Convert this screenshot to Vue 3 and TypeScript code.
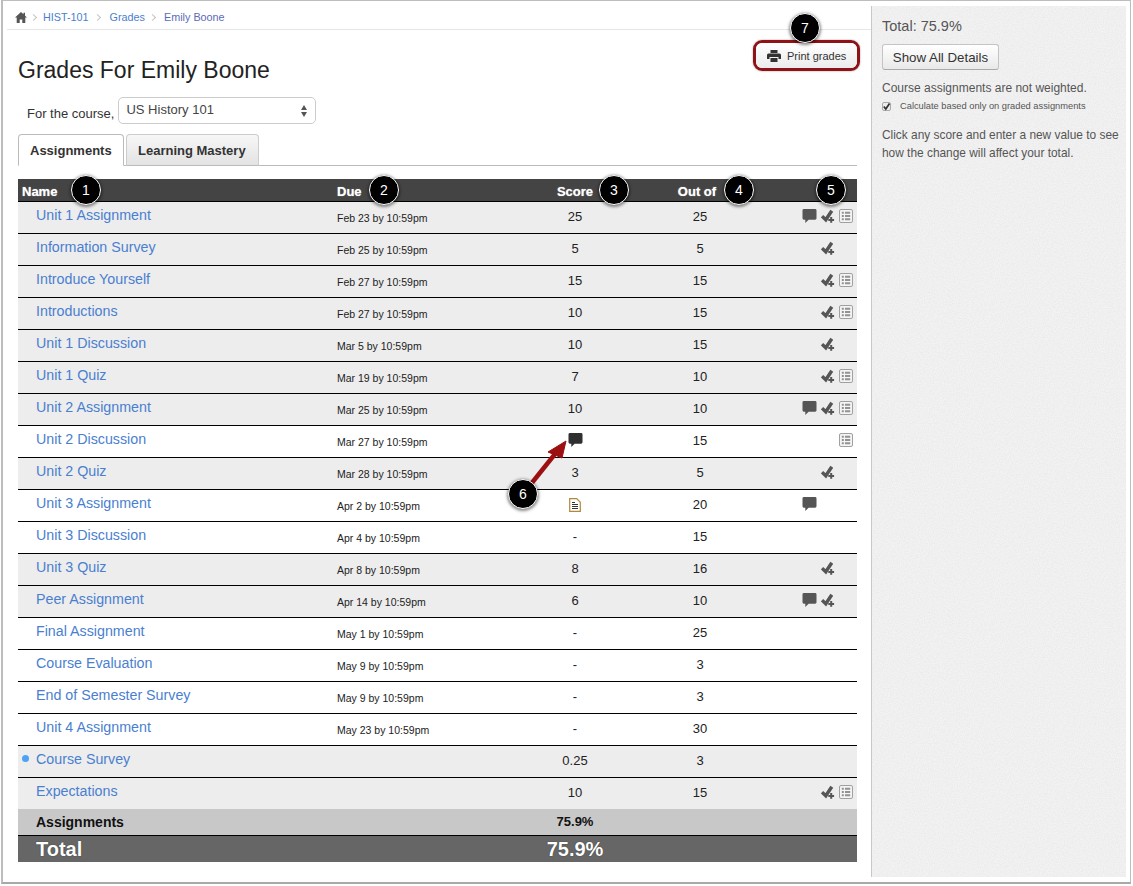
<script setup lang="ts">
interface Row {
  name: string;
  due: string;
  score: string;
  outOf: string;
  icons: string;
  shade?: boolean;
  dot?: boolean;
}

const rows: Row[] = [
  { name: "Unit 1 Assignment", due: "Feb 23 by 10:59pm", score: "25", outOf: "25", icons: "cmr", shade: true },
  { name: "Information Survey", due: "Feb 25 by 10:59pm", score: "5", outOf: "5", icons: "m", shade: true },
  { name: "Introduce Yourself", due: "Feb 27 by 10:59pm", score: "15", outOf: "15", icons: "mr", shade: true },
  { name: "Introductions", due: "Feb 27 by 10:59pm", score: "10", outOf: "15", icons: "mr", shade: true },
  { name: "Unit 1 Discussion", due: "Mar 5 by 10:59pm", score: "10", outOf: "15", icons: "m", shade: true },
  { name: "Unit 1 Quiz", due: "Mar 19 by 10:59pm", score: "7", outOf: "10", icons: "mr", shade: true },
  { name: "Unit 2 Assignment", due: "Mar 25 by 10:59pm", score: "10", outOf: "10", icons: "cmr", shade: true },
  { name: "Unit 2 Discussion", due: "Mar 27 by 10:59pm", score: "bubble", outOf: "15", icons: "r" },
  { name: "Unit 2 Quiz", due: "Mar 28 by 10:59pm", score: "3", outOf: "5", icons: "m", shade: true },
  { name: "Unit 3 Assignment", due: "Apr 2 by 10:59pm", score: "doc", outOf: "20", icons: "c" },
  { name: "Unit 3 Discussion", due: "Apr 4 by 10:59pm", score: "-", outOf: "15", icons: "" },
  { name: "Unit 3 Quiz", due: "Apr 8 by 10:59pm", score: "8", outOf: "16", icons: "m", shade: true },
  { name: "Peer Assignment", due: "Apr 14 by 10:59pm", score: "6", outOf: "10", icons: "cm", shade: true },
  { name: "Final Assignment", due: "May 1 by 10:59pm", score: "-", outOf: "25", icons: "" },
  { name: "Course Evaluation", due: "May 9 by 10:59pm", score: "-", outOf: "3", icons: "" },
  { name: "End of Semester Survey", due: "May 9 by 10:59pm", score: "-", outOf: "3", icons: "" },
  { name: "Unit 4 Assignment", due: "May 23 by 10:59pm", score: "-", outOf: "30", icons: "" },
  { name: "Course Survey", due: "", score: "0.25", outOf: "3", icons: "", shade: true, dot: true },
  { name: "Expectations", due: "", score: "10", outOf: "15", icons: "mr", shade: true },
];

// numbered callouts drawn on top of the screenshot
const notes = [
  { n: 1, x: 86, y: 190 },
  { n: 2, x: 384, y: 190 },
  { n: 3, x: 614, y: 190 },
  { n: 4, x: 739, y: 190 },
  { n: 5, x: 831, y: 190 },
  { n: 6, x: 523, y: 494 },
  { n: 7, x: 805, y: 28 },
];
</script>

<template>
  <div class="shot">
    <svg class="defs" width="0" height="0">
      <symbol id="i-comment" viewBox="0 0 15 15">
        <path d="M1.500 0h12A1.500 1.500 0 0 1 15 1.500v8.500a1.500 1.500 0 0 1-1.500 1.500H6.500L3 15v-3.500H1.500A1.500 1.500 0 0 1 0 10V1.500A1.500 1.500 0 0 1 1.500 0z" fill="currentColor" />
      </symbol>
      <symbol id="i-muted" viewBox="0 0 14 14">
        <path d="M1 7.200 4.800 10.800 10.800 1.800" fill="none" stroke="currentColor" stroke-width="3.400" />
        <path d="M10.200 8v5.800M7.300 10.900h5.800" fill="none" stroke="currentColor" stroke-width="2" />
      </symbol>
      <symbol id="i-rubric" viewBox="0 0 14 14">
        <rect x="0.500" y="0.500" width="13" height="13" rx="1.500" fill="#f4f4f4" stroke="#a0a0a0" />
        <path d="M2.800 3.700h2M2.800 7h2M2.800 10.300h2M6 3.700h5.200M6 7h5.200M6 10.300h5.200" stroke="#929292" stroke-width="2" />
      </symbol>
      <filter id="grain">
        <feTurbulence type="fractalNoise" baseFrequency="0.8" numOctaves="2" />
        <feColorMatrix values="0 0 0 0 0  0 0 0 0 0  0 0 0 0 0  0.07 0 0 0 -0.02" />
      </filter>
    </svg>

    <div class="window">
      <div class="main">
        <nav class="crumbs">
          <svg class="home" viewBox="0 0 12 11" width="12" height="11">
            <path d="M6 0 0 5.500h1.700V11h3V7.500h2.600V11h3V5.500H12L10 3.700V.8H8.500v1.500z" fill="#555" />
          </svg>
          <span class="sep first"></span>
          <a>HIST-101</a>
          <span class="sep wide"></span>
          <a>Grades</a>
          <span class="sep"></span>
          <a class="current">Emily Boone</a>
        </nav>

        <div class="content">
          <div class="title-row">
            <h1>Grades For Emily Boone</h1>
            <div class="print-ring">
              <button class="print">
                <svg viewBox="0 0 14 12" width="14" height="12">
                  <path d="M3.500 0h7v3h-7zM1.500 3.500h11A1.500 1.500 0 0 1 14 5v4h-2.500V7h-9v2H0V5a1.500 1.500 0 0 1 1.500-1.500zM3.500 8h7v4h-7z" fill="#333" />
                </svg>
                Print grades
              </button>
            </div>
          </div>

          <div class="course-row">
            <span class="course-label">For the course,</span>
            <div class="select">
              <span>US History 101</span>
              <span class="updown"><i class="up"></i><i class="down"></i></span>
            </div>
          </div>

          <div class="tabs">
            <div class="tab active">Assignments</div>
            <div class="tab">Learning Mastery</div>
          </div>

          <div class="table">
            <div class="row head">
              <div class="h-name">Name</div>
              <div>Due</div>
              <div class="center">Score</div>
              <div class="center h-out">Out of</div>
              <div></div>
            </div>

            <div v-for="r in rows" :key="r.name" class="row" :class="{ shade: r.shade }">
              <div class="name"><span v-if="r.dot" class="dot"></span><a>{{ r.name }}</a></div>
              <div class="due">{{ r.due }}</div>
              <div class="num score">
                <svg v-if="r.score === 'bubble'" class="score-bubble" width="15" height="14"><use href="#i-comment" /></svg>
                <svg v-else-if="r.score === 'doc'" class="score-doc" viewBox="0 0 12 14" width="12" height="14">
                  <path d="M.7.7h7l3.600 3.600v9H.7z" fill="#fff" stroke="#b08a3a" stroke-width="1.200" />
                  <path d="M3 4.500h3M3 6.500h6M3 8.500h6M3 10.500h6" stroke="#333" stroke-width="1" />
                </svg>
                <template v-else>{{ r.score }}</template>
              </div>
              <div class="num">{{ r.outOf }}</div>
              <div class="icons">
                <svg v-if="r.icons.includes('c')" class="ic-c" width="15" height="14"><use href="#i-comment" /></svg>
                <span v-else></span>
                <svg v-if="r.icons.includes('m')" class="ic-m" width="14" height="14"><use href="#i-muted" /></svg>
                <span v-else></span>
                <svg v-if="r.icons.includes('r')" width="14" height="14"><use href="#i-rubric" /></svg>
              </div>
            </div>

            <div class="row group">
              <div class="name">Assignments</div>
              <div></div>
              <div class="center">75.9%</div>
            </div>
            <div class="row total">
              <div class="name">Total</div>
              <div></div>
              <div class="center">75.9%</div>
            </div>
          </div>
        </div>
      </div>

      <aside class="side">
        <svg class="grain" width="100%" height="100%"><rect width="100%" height="100%" filter="url(#grain)" /></svg>
        <div class="side-total">Total: 75.9%</div>
        <button class="details">Show All Details</button>
        <p class="weighted">Course assignments are not weighted.</p>
        <label class="only-graded">
          <span class="check">
            <svg viewBox="0 0 9 9" width="9" height="9"><path d="M1.800 4.500 3.800 7 7.500 1.500" fill="none" stroke="#333" stroke-width="1.700" /></svg>
          </span>
          Calculate based only on graded assignments
        </label>
        <p class="hint">Click any score and enter a new value to see how the change will affect your total.</p>
      </aside>
    </div>

    <svg class="arrow" width="1133" height="886">
      <path d="M531 484 555 454" stroke="#9c1012" stroke-width="4.500" fill="none" />
      <path d="M566 441 548 452 562 458z" fill="#9c1012" stroke="#9c1012" stroke-width="1" />
    </svg>

    <div
      v-for="b in notes"
      :key="b.n"
      class="badge"
      :style="{ left: b.x - 15 + 'px', top: b.y - 15 + 'px' }"
    >
      {{ b.n }}
    </div>
  </div>
</template>

<style>
html,
body {
  margin: 0;
  background: #fff;
}
</style>

<style scoped>
.shot {
  position: relative;
  width: 1133px;
  height: 886px;
  overflow: hidden;
  font-family: "Liberation Sans", Arial, sans-serif;
  color: #222;
}
.defs {
  position: absolute;
}
.window {
  box-sizing: border-box;
  width: 1130px;
  height: 884px;
  margin-left: 1px;
  border: 1px solid #bdbdbd;
  border-left-width: 2px;
  border-bottom: 2px solid #a8a8a8;
  padding: 5px 3px 5px 4px;
  display: flex;
  background: #fff;
}
.main {
  flex: 0 0 864px;
}
.crumbs {
  box-sizing: border-box;
  height: 24px;
  border-bottom: 1px solid #e6e6e6;
  display: flex;
  align-items: center;
  padding: 0 0 1px 8px;
  font-size: 10.800px;
}
.crumbs a {
  color: #4a7fd0;
}
.crumbs a.current {
  color: #5a6bb8;
}
.sep {
  width: 4px;
  height: 4px;
  border-top: 1px solid #c4c4c4;
  border-right: 1px solid #c4c4c4;
  transform: rotate(45deg);
  margin: 0 9px 0 5px;
}
.sep.first {
  margin: 0 7px 0 4px;
}
.sep.wide {
  margin: 0 10px 0 6px;
}
.content {
  padding: 0 14px 0 11px;
}
.title-row {
  height: 67px;
  display: flex;
  justify-content: space-between;
  align-items: flex-start;
}
h1 {
  margin: 26px 0 0;
  font-size: 23px;
  line-height: 28px;
  font-weight: 400;
  color: #222;
}
.print-ring {
  box-sizing: border-box;
  margin: 10px -3px 0 0;
  width: 107px;
  height: 31px;
  border: 3px solid #8e1216;
  border-radius: 9px;
  box-shadow: 0 0 2px rgba(0, 0, 0, 0.4);
}
.print {
  width: 100%;
  height: 100%;
  border: 0;
  border-radius: 6px;
  padding: 0 0 0 11px;
  background: linear-gradient(#fff, #ececec);
  font-family: inherit;
  font-size: 11px;
  color: #333;
  display: flex;
  align-items: center;
  gap: 6px;
}
.course-row {
  height: 27px;
  display: flex;
  align-items: flex-start;
  margin-bottom: 10px;
}
.course-label {
  font-size: 13px;
  padding: 9px 4px 0 9px;
  color: #333;
}
.select {
  box-sizing: border-box;
  width: 198px;
  height: 27px;
  border: 1px solid #ccc;
  border-radius: 5px;
  padding: 4px 8px 0 7px;
  font-size: 13px;
  line-height: 16px;
  color: #444;
  display: flex;
  justify-content: space-between;
}
.updown {
  display: flex;
  flex-direction: column;
  gap: 2px;
  padding-top: 3px;
}
.updown i {
  width: 0;
  height: 0;
  border-left: 3px solid transparent;
  border-right: 3px solid transparent;
}
.up {
  border-bottom: 5px solid #555;
}
.down {
  border-top: 5px solid #555;
}
.tabs {
  height: 32px;
  box-sizing: border-box;
  display: flex;
  gap: 2px;
  border-bottom: 1px solid #bbb;
}
.tab {
  box-sizing: border-box;
  height: 32px;
  padding: 8px 12px 0 11px;
  border: 1px solid #ccc;
  border-bottom: 1px solid #bbb;
  border-radius: 4px 4px 0 0;
  background: linear-gradient(#f7f7f7, #e3e3e3);
  font-size: 13px;
  line-height: 16px;
  font-weight: 700;
  color: #333;
}
.tab.active {
  width: 106px;
  background: #fff;
  border-color: #bbb;
  border-bottom-color: #fff;
}
.table {
  margin-top: 13px;
}
.row {
  box-sizing: border-box;
  height: 32px;
  display: grid;
  grid-template-columns: 319px 193px 90px 160px 77px;
  border-bottom: 1px solid #000;
}
.row:nth-last-child(3) {
  height: 31px;
  border-bottom: 0;
}
.row.shade {
  background: #ededed;
}
.row.head {
  height: 23px;
  background: #444;
  color: #fff;
  font-size: 13px;
  font-weight: 700;
  line-height: 25px;
  text-shadow: 0 0 1px rgba(255, 255, 255, 0.7);
}
.center {
  text-align: center;
}
.h-name {
  padding-left: 4px;
}
.h-out {
  padding-right: 6px;
}
.name {
  padding: 3px 0 0 18px;
  font-size: 14.250px;
  line-height: 20px;
}
.name a {
  color: #4a7fd0;
}
.dot {
  display: inline-block;
  width: 7px;
  height: 7px;
  border-radius: 50%;
  background: #4aa3f5;
  margin: 0 7px 4px -14px;
  vertical-align: middle;
}
.due {
  padding-top: 10px;
  font-size: 10.500px;
  line-height: 12px;
  color: #222;
}
.num {
  padding-top: 7px;
  text-align: center;
  font-size: 13px;
  line-height: 16px;
  color: #222;
}
.score-bubble {
  color: #2f2f2f;
}
.score-doc {
  margin-top: 1px;
}
.icons {
  display: grid;
  grid-template-columns: 19px 18px 14px;
  padding: 7px 0 0 22px;
  color: #555;
}
.row.group {
  height: 27px;
  background: #c8c8c8;
  font-weight: 700;
  font-size: 13px;
  line-height: 26px;
  color: #111;
}
.row.group .name {
  padding-top: 0;
  font-size: 14px;
  line-height: 26px;
}
.row.total {
  height: 26px;
  border-bottom: 0;
  background: #666;
  color: #fff;
  font-weight: 700;
  font-size: 20px;
  line-height: 26px;
  text-shadow: 0 0 1px #222;
}
.row.total .name {
  padding-top: 0;
  font-size: 20px;
  line-height: 26px;
}
.side {
  position: relative;
  box-sizing: border-box;
  width: 255px;
  border-left: 1px solid #c8c8c8;
  background: #f3f3f3;
  padding: 12px 4px 0 10px;
  color: #555;
  font-size: 12px;
}
.grain {
  position: absolute;
  left: 0;
  top: 0;
}
.side > :not(.grain) {
  position: relative;
}
.side-total {
  font-size: 14.500px;
  line-height: 16px;
}
.details {
  display: block;
  box-sizing: border-box;
  width: 117px;
  height: 26px;
  margin-top: 10px;
  border: 1px solid #c4c4c4;
  border-bottom-color: #aaa;
  border-radius: 3px;
  background: linear-gradient(#fff, #e9e9e9);
  font-family: inherit;
  font-size: 13.300px;
  color: #333;
  padding: 0;
}
.weighted {
  margin: 10px 0 0;
  line-height: 16px;
  font-size: 12px;
}
.only-graded {
  display: flex;
  align-items: center;
  height: 14px;
  margin-top: 3px;
  font-size: 9.300px;
  gap: 9px;
}
.check {
  width: 9px;
  height: 9px;
  box-sizing: border-box;
  border: 1px solid #aaa;
  border-radius: 2px;
  background: #eee;
  display: flex;
}
.check svg {
  flex: none;
  margin: -1px;
}
.hint {
  margin: 13px 0 0;
  font-size: 11.900px;
  line-height: 18px;
}
.arrow {
  position: absolute;
  left: 0;
  top: 0;
  pointer-events: none;
}
.badge {
  position: absolute;
  box-sizing: border-box;
  width: 30px;
  height: 30px;
  border: 1px solid #fff;
  border-radius: 50%;
  background: #000;
  color: #fff;
  font-size: 14px;
  line-height: 28px;
  text-align: center;
  box-shadow: 0 1px 3px 1px rgba(0, 0, 0, 0.45);
}
</style>
